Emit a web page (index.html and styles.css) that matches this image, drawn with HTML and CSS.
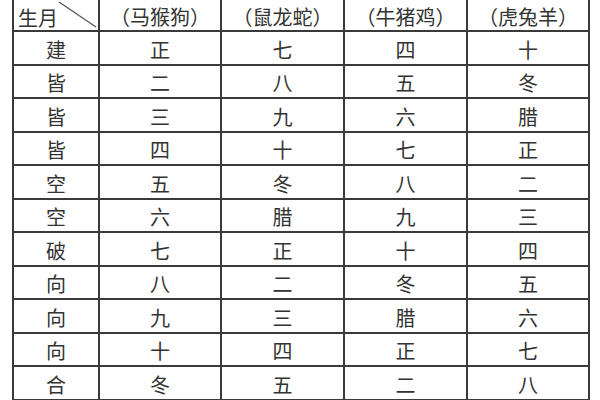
FILE: index.html
```html
<!DOCTYPE html>
<html lang="zh">
<head>
<meta charset="utf-8">
<link rel="stylesheet" href="styles.css">
</head>
<body>
<table class="grid">
  <colgroup>
    <col class="c0"><col class="c1"><col class="c2"><col class="c3"><col class="c4">
  </colgroup>
  <thead>
    <tr class="head">
      <th class="corner"><span class="corner-label">生月</span>
        <svg class="diag" width="86" height="34" viewBox="0 0 86 34"><line x1="45" y1="4" x2="82" y2="29" stroke="#555" stroke-width="1.3"/></svg>
      </th>
      <th>（马猴狗）</th>
      <th>（鼠龙蛇）</th>
      <th>（牛猪鸡）</th>
      <th>（虎兔羊）</th>
    </tr>
  </thead>
  <tbody>
    <tr><td>建</td><td>正</td><td>七</td><td>四</td><td>十</td></tr>
    <tr><td>皆</td><td>二</td><td>八</td><td>五</td><td>冬</td></tr>
    <tr><td>皆</td><td>三</td><td>九</td><td>六</td><td>腊</td></tr>
    <tr><td>皆</td><td>四</td><td>十</td><td>七</td><td>正</td></tr>
    <tr><td>空</td><td>五</td><td>冬</td><td>八</td><td>二</td></tr>
    <tr><td>空</td><td>六</td><td>腊</td><td>九</td><td>三</td></tr>
    <tr><td>破</td><td>七</td><td>正</td><td>十</td><td>四</td></tr>
    <tr><td>向</td><td>八</td><td>二</td><td>冬</td><td>五</td></tr>
    <tr><td>向</td><td>九</td><td>三</td><td>腊</td><td>六</td></tr>
    <tr><td>向</td><td>十</td><td>四</td><td>正</td><td>七</td></tr>
    <tr><td>合</td><td>冬</td><td>五</td><td>二</td><td>八</td></tr>
  </tbody>
</table>
</body>
</html>
```

FILE: styles.css
```css
html, body {
  margin: 0;
  padding: 0;
  background: #ffffff;
  overflow: hidden;
}

.grid {
  border-collapse: collapse;
  table-layout: fixed;
  width: 578px;
  margin: -4px 0 0 12px;
  font-family: "Noto Sans CJK SC", "Noto Sans CJK JP", sans-serif;
  font-weight: 400;
  font-size: 20px;
  color: #333333;
}

.c0 { width: 86px; }
.c1 { width: 122px; }
.c2 { width: 123px; }
.c3 { width: 123px; }
.c4 { width: 122px; }

.grid th,
.grid td {
  border: 2px solid #3a3a3a;
  padding: 0;
  text-align: center;
  vertical-align: middle;
  line-height: 1;
}

.grid th {
  font-weight: 400;
  height: 34px;
  box-sizing: border-box;
  padding-top: 5px;
}

.grid td {
  height: 33px;
  box-sizing: border-box;
  padding-top: 3px;
}

.grid tbody tr:nth-child(odd) td {
  height: 34px;
}

.corner {
  position: relative;
  text-align: left !important;
}

.corner-label {
  display: block;
  padding-left: 4px;
  padding-top: 3px;
}

.diag {
  position: absolute;
  left: 0;
  top: 0;
}
```
